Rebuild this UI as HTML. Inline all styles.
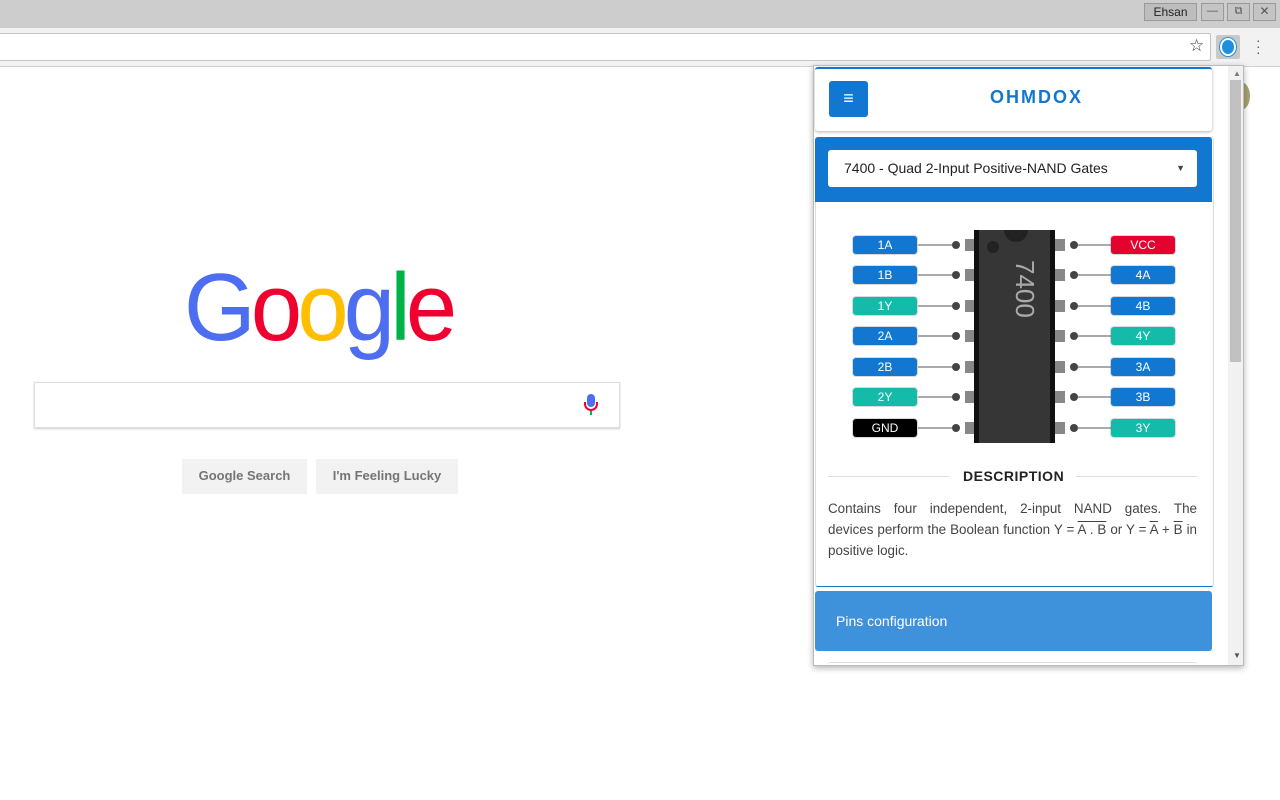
<!DOCTYPE html>
<html><head><style>
body{margin:0;width:1280px;height:800px;position:relative;overflow:hidden;background:#fff;font-family:"Liberation Sans",sans-serif}
.abs{position:absolute}
.pl{position:absolute;width:64px;height:18px;border-radius:3px;color:#fff;font-size:12px;line-height:18px;text-align:center;box-shadow:0 0 0 1px rgba(0,0,0,.15)}
.b{background:#1277d1}.t{background:#14bba9}.r{background:#e4032e}.k{background:#000}
</style></head><body>
<div class="abs" style="left:0;top:0;width:1280px;height:28px;background:#cdcdcd"></div>
<div class="abs" style="left:1144px;top:3px;width:51px;height:16px;border:1px solid #9a9a9a;background:#bdbdbd;font-size:12px;color:#222;text-align:center;line-height:16px">Ehsan</div>
<div class="abs" style="left:1201px;top:3px;width:21px;height:16px;border:1px solid #9a9a9a;background:#c4c4c4;color:#555;font-size:11px;text-align:center;line-height:15px">—</div>
<div class="abs" style="left:1227px;top:3px;width:21px;height:16px;border:1px solid #9a9a9a;background:#c4c4c4;color:#555;font-size:11px;text-align:center;line-height:15px">⧉</div>
<div class="abs" style="left:1253px;top:3px;width:21px;height:16px;border:1px solid #9a9a9a;background:#c4c4c4;color:#555;font-size:12px;text-align:center;line-height:15px">✕</div>
<div class="abs" style="left:0;top:28px;width:1280px;height:38px;background:#f2f2f2;border-bottom:1px solid #cfcfcf"></div>
<div class="abs" style="left:-2px;top:33px;width:1211px;height:26px;background:#fff;border:1px solid #c4c4c4;border-radius:2px"></div>
<div class="abs" style="left:1189px;top:36px;font-size:17px;color:#333">☆</div>
<div class="abs" style="left:1216px;top:35px;width:24px;height:24px;background:#c8c8c8;border-radius:2px"></div>
<div class="abs" style="left:1220px;top:38px;width:12px;height:14px;border:2px solid #fff;border-radius:50%;background:#1b8fe0;box-shadow:0 0 0 1px #1b8fe0"></div>
<div class="abs" style="left:1256px;top:37px;font-size:14px;color:#555;line-height:6px">·<br>·<br>·</div>

<div class="abs" style="left:184px;top:248px;font-size:96px;letter-spacing:-5px;line-height:120px;transform:scaleX(0.96);transform-origin:0 0;font-family:'Liberation Sans',sans-serif"><span style="color:#4e6ef2">G</span><span style="color:#f0002e">o</span><span style="color:#ffbf00">o</span><span style="color:#4e6ef2">g</span><span style="color:#00b347">l</span><span style="color:#f0002e">e</span></div>
<div class="abs" style="left:34px;top:382px;width:584px;height:44px;border:1px solid #ddd;box-shadow:0 1px 2px rgba(0,0,0,.2);background:#fff"></div>
<div class="abs" style="left:587px;top:394px;width:8px;height:13px;background:#4e6ef2;border-radius:4px"></div>
<div class="abs" style="left:584px;top:402px;width:10px;height:7px;border:2px solid #f0002e;border-top:none;border-radius:0 0 7px 7px"></div>
<div class="abs" style="left:590px;top:411px;width:2px;height:4px;background:#00b347"></div>
<div class="abs" style="left:182px;top:459px;width:125px;height:35px;background:#f2f2f2;color:#757575;font-weight:bold;font-size:13px;text-align:center;line-height:34px">Google Search</div>
<div class="abs" style="left:316px;top:459px;width:142px;height:35px;background:#f2f2f2;color:#757575;font-weight:bold;font-size:13px;text-align:center;line-height:34px">I'm Feeling Lucky</div>
<div class="abs" style="left:1232px;top:82px;width:18px;height:28px;border-radius:50%;background:#a8a070"></div>

<!-- popup -->
<div class="abs" style="left:813px;top:65px;width:429px;height:599px;background:#fff;border:1px solid #bbb;box-shadow:0 2px 6px rgba(0,0,0,.3);overflow:hidden">
 <div class="abs" style="left:414px;top:0;width:15px;height:599px;background:#f1f1f1"></div>
 <div class="abs" style="left:416px;top:14px;width:11px;height:282px;background:#c1c1c1"></div>
 <div class="abs" style="left:419px;top:3px;font-size:8px;color:#777">▲</div>
 <div class="abs" style="left:419px;top:585px;font-size:8px;color:#555">▼</div>
 <div class="abs" style="left:1px;top:1px;width:397px;height:62px;border-top:2px solid #1277d1;border-radius:3px;box-shadow:0 1px 3px rgba(0,0,0,.3);background:#fff"></div>
 <div class="abs" style="left:15px;top:15px;width:39px;height:36px;background:#1277d1;border-radius:3px;color:#fff;font-size:18px;text-align:center;line-height:35px">≡</div>
 <div class="abs" style="left:176px;top:21px;color:#1277d1;font-size:18px;font-weight:bold;letter-spacing:2px">OHMDOX</div>
 <div class="abs" style="left:1px;top:71px;width:397px;height:448px;background:#fff;border:1px solid #ddd;border-bottom:1px solid #1277d1;border-radius:3px"></div>
 <div class="abs" style="left:1px;top:71px;width:397px;height:65px;background:#1277d1;border-radius:3px 3px 0 0"></div>
 <div class="abs" style="left:14px;top:84px;width:369px;height:37px;background:#fff;border-radius:3px;font-size:14px;color:#222;line-height:37px;text-indent:16px">7400 - Quad 2-Input Positive-NAND Gates<span style="position:absolute;right:12px;font-size:9px;color:#444">▼</span></div>
 <svg class="abs" style="left:0;top:150px" width="400" height="240">
  <g stroke="#555" stroke-width="1">
   <line x1="104" y1="29" x2="142" y2="29"/><line x1="104" y1="59" x2="142" y2="59"/><line x1="104" y1="90" x2="142" y2="90"/><line x1="104" y1="120" x2="142" y2="120"/><line x1="104" y1="151" x2="142" y2="151"/><line x1="104" y1="181" x2="142" y2="181"/><line x1="104" y1="212" x2="142" y2="212"/>
   <line x1="260" y1="29" x2="298" y2="29"/><line x1="260" y1="59" x2="298" y2="59"/><line x1="260" y1="90" x2="298" y2="90"/><line x1="260" y1="120" x2="298" y2="120"/><line x1="260" y1="151" x2="298" y2="151"/><line x1="260" y1="181" x2="298" y2="181"/><line x1="260" y1="212" x2="298" y2="212"/>
  </g>
  <g fill="#444">
   <circle cx="142" cy="29" r="4"/><circle cx="142" cy="59" r="4"/><circle cx="142" cy="90" r="4"/><circle cx="142" cy="120" r="4"/><circle cx="142" cy="151" r="4"/><circle cx="142" cy="181" r="4"/><circle cx="142" cy="212" r="4"/>
   <circle cx="260" cy="29" r="4"/><circle cx="260" cy="59" r="4"/><circle cx="260" cy="90" r="4"/><circle cx="260" cy="120" r="4"/><circle cx="260" cy="151" r="4"/><circle cx="260" cy="181" r="4"/><circle cx="260" cy="212" r="4"/>
  </g>
  <g fill="#888">
   <rect x="151" y="23" width="12" height="12"/><rect x="151" y="53" width="12" height="12"/><rect x="151" y="84" width="12" height="12"/><rect x="151" y="114" width="12" height="12"/><rect x="151" y="145" width="12" height="12"/><rect x="151" y="175" width="12" height="12"/><rect x="151" y="206" width="12" height="12"/>
   <rect x="239" y="23" width="12" height="12"/><rect x="239" y="53" width="12" height="12"/><rect x="239" y="84" width="12" height="12"/><rect x="239" y="114" width="12" height="12"/><rect x="239" y="145" width="12" height="12"/><rect x="239" y="175" width="12" height="12"/><rect x="239" y="206" width="12" height="12"/>
  </g>
  <rect x="160" y="14" width="81" height="213" fill="#111"/>
  <rect x="165" y="14" width="71" height="213" fill="#363636"/>
  <path d="M190 14 a12 12 0 0 0 24 0z" fill="#222"/>
  <circle cx="179" cy="31" r="6" fill="#222"/>
  <text x="0" y="0" transform="translate(202,44) rotate(90)" fill="#aaa" font-size="26" font-family="Liberation Sans">7400</text>
 </svg>
 <div class="pl b" style="left:39px;top:170px">1A</div>
 <div class="pl b" style="left:39px;top:200px">1B</div>
 <div class="pl t" style="left:39px;top:231px">1Y</div>
 <div class="pl b" style="left:39px;top:261px">2A</div>
 <div class="pl b" style="left:39px;top:292px">2B</div>
 <div class="pl t" style="left:39px;top:322px">2Y</div>
 <div class="pl k" style="left:39px;top:353px">GND</div>
 <div class="pl r" style="left:297px;top:170px">VCC</div>
 <div class="pl b" style="left:297px;top:200px">4A</div>
 <div class="pl b" style="left:297px;top:231px">4B</div>
 <div class="pl t" style="left:297px;top:261px">4Y</div>
 <div class="pl b" style="left:297px;top:292px">3A</div>
 <div class="pl b" style="left:297px;top:322px">3B</div>
 <div class="pl t" style="left:297px;top:353px">3Y</div>
 <div class="abs" style="left:14px;top:410px;width:121px;height:1px;background:#ddd"></div>
 <div class="abs" style="left:262px;top:410px;width:121px;height:1px;background:#ddd"></div>
 <div class="abs" style="left:149px;top:402px;font-size:14px;font-weight:bold;letter-spacing:0.5px;color:#222">DESCRIPTION</div>
 <div class="abs" style="left:14px;top:432px;width:369px;font-size:13.4px;line-height:21px;color:#444">
  <div style="text-align:justify;text-align-last:justify">Contains four independent, 2-input NAND gates. The</div>
  <div style="text-align:justify;text-align-last:justify">devices perform the Boolean function Y = <span style="text-decoration:overline">A . B</span> or Y = <span style="text-decoration:overline">A</span> + <span style="text-decoration:overline">B</span> in</div>
  <div>positive logic.</div>
 </div>
 <div class="abs" style="left:1px;top:525px;width:397px;height:60px;background:#3e91db;border-radius:3px;color:#fff;font-size:14px;line-height:60px;text-indent:21px">Pins configuration</div>
 <div class="abs" style="left:14px;top:596px;width:369px;height:10px;border-top:1px solid #ddd;border-radius:3px"></div>
</div>
</body></html>
